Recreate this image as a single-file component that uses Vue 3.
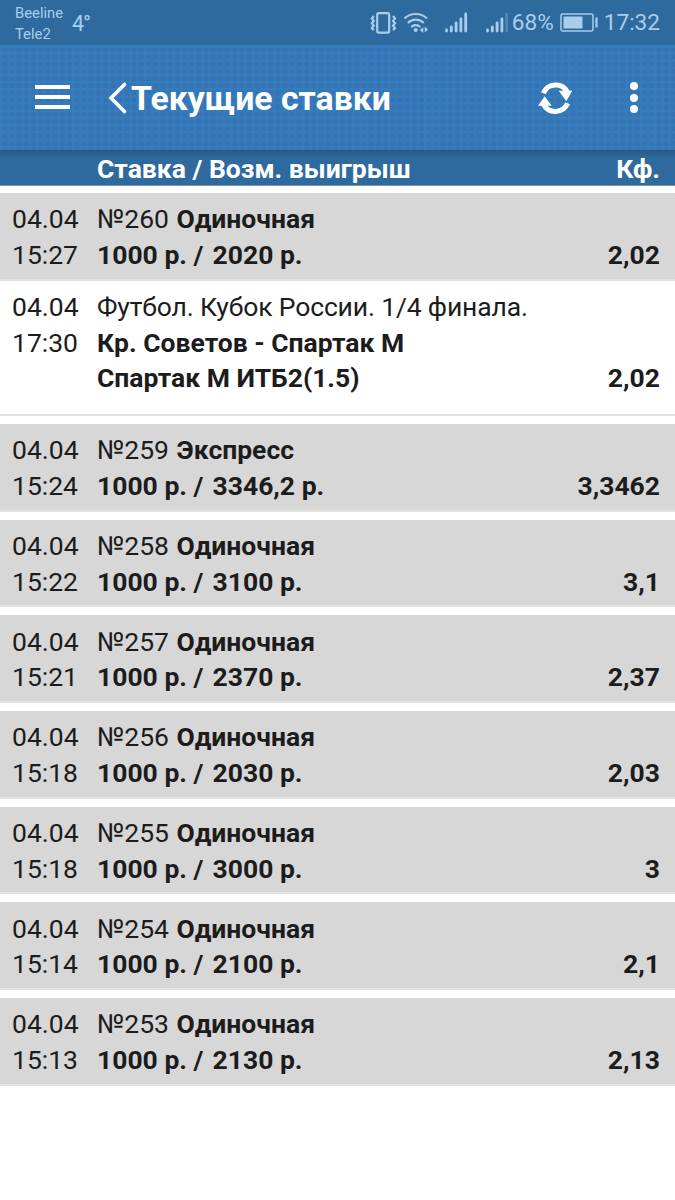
<template>
    <div class="screen">
        <div class="status-bar">
            <div class="carriers">
                <div>Beeline</div>
                <div>Tele2</div>
            </div>
            <div class="temp">4<span class="degree">°</span></div>
            <div class="indicators">
                <svg class="vibro" width="27" height="22" viewBox="0 0 27 22">
                    <rect x="7.2" y="1.2" width="12" height="19.4" rx="1.5" />
                    <path d="M3.8 4l-2 2.5 2 2.4-2 2.4 2 2.4-2 2.4 2 2M23 4l2 2.5-2 2.4 2 2.4-2 2.4 2 2.4-2 2" />
                </svg>
                <svg class="wifi" width="26" height="21" viewBox="0 0 26 21">
                    <path d="M1.500 6.500c6-6 16.500-6 22.500 0M4.800 11c4.500-4.500 11.500-4.500 16 0M8.200 15c2.500-2.600 6.500-2.600 9 0" />
                    <circle cx="12.700" cy="18" r="2" />
                    <path class="fill" d="M20.300 15v6l-3.500-3zM21.700 14.500v6l3.500-3z" />
                </svg>
                <svg v-for="n in 2" :key="n" :class="'signal signal' + n" width="23" height="21" viewBox="0 0 23 21">
                    <path d="M1.500 18v1M6.300 15v4M11.100 11v8M15.900 7v12" />
                    <path :class="{ faded: n === 2 }" d="M20.700 2v17" />
                </svg>
                <span class="percent">68%</span>
                <svg class="battery" width="39" height="19" viewBox="0 0 39 19">
                    <rect class="case" x="1" y="1" width="32" height="17" rx="2" />
                    <rect class="charge" x="3.500" y="3.500" width="19" height="12" />
                    <path d="M36.500 4.500v10" />
                </svg>
                <span class="clock">17:32</span>
            </div>
        </div>
        <div class="toolbar">
            <button class="menu">
                <span></span>
                <span></span>
                <span></span>
            </button>
            <button class="back">
                <svg width="20" height="34" viewBox="0 0 20 34">
                    <path d="M16.500 3.500L3 17l13.500 13.500" />
                </svg>
            </button>
            <h1>Текущие ставки</h1>
            <button class="refresh">
                <svg width="36" height="34" viewBox="0 0 36 34">
                    <path class="arc" d="M5.300 12.300a13.500 13.500 0 0 1 24.200-1.300M29.700 22.300a13.500 13.500 0 0 1-24.200 1.200" />
                    <path d="M20.700 9.700h13.600l-6 10.500zM0 24.800h13.700l-7-9.500z" />
                </svg>
            </button>
            <button class="more">
                <i></i>
                <i></i>
                <i></i>
            </button>
        </div>
        <div class="columns">
            <span>Ставка / Возм. выигрыш</span>
            <span>Кф.</span>
        </div>
        <div class="bets">
            <div v-for="bet in bets" :key="bet.id" class="bet">
                <div class="row">
                    <div class="date">04.04<br>{{bet.time}}</div>
                    <div class="info">
                        <div>№{{bet.id}} <b class="type">{{bet.type}}</b></div>
                        <div><b>1000 р. / <span class="win">{{bet.win}} р.</span></b></div>
                    </div>
                    <div class="coef">{{bet.coef}}</div>
                </div>
                <div v-for="event in bet.events" :key="event.teams" class="row event">
                    <div class="date">04.04<br>{{event.time}}</div>
                    <div class="info">
                        <div class="league">{{event.league}}</div>
                        <div><b>{{event.teams}}</b></div>
                        <div><b>{{event.pick}}</b></div>
                    </div>
                    <div class="coef">{{event.coef}}</div>
                </div>
            </div>
        </div>
    </div>
</template>

<script setup>
    import {ref} from "vue";

    const single = 'Одиночная';

    const bets = ref([
        {
            id: 260, time: '15:27', type: single, win: '2020', coef: '2,02',
            events: [{
                time: '17:30',
                league: 'Футбол. Кубок России. 1/4 финала.',
                teams: 'Кр. Советов - Спартак М',
                pick: 'Спартак М ИТБ2(1.5)',
                coef: '2,02'
            }]
        },
        {id: 259, time: '15:24', type: 'Экспресс', win: '3346,2', coef: '3,3462'},
        {id: 258, time: '15:22', type: single, win: '3100', coef: '3,1'},
        {id: 257, time: '15:21', type: single, win: '2370', coef: '2,37'},
        {id: 256, time: '15:18', type: single, win: '2030', coef: '2,03'},
        {id: 255, time: '15:18', type: single, win: '3000', coef: '3'},
        {id: 254, time: '15:14', type: single, win: '2100', coef: '2,1'},
        {id: 253, time: '15:13', type: single, win: '2130', coef: '2,13'},
    ]);
</script>

<style>
    body {
        margin: 0;
        background-color: #fff;
    }
</style>

<style scoped>
    * {
        box-sizing: border-box;
    }

    .screen {
        width: 675px;
        height: 1200px;
        overflow: hidden;
        font-family: Roboto, 'Liberation Sans', sans-serif;
        color: #1c1c1c;
        background-color: #fff;
    }

    .status-bar {
        display: flex;
        height: 45px;
        padding-left: 15px;
        color: #a9cdec;
        background-color: #2e6a9e;
    }

    .carriers {
        width: 57px;
        padding-top: 3px;
        font-size: 14.8px;
        line-height: 20.5px;
    }

    .temp {
        font-size: 21.5px;
        line-height: 47px;
    }

    .degree {
        margin-left: -1px;
    }

    .indicators {
        display: flex;
        align-items: center;
        margin-left: auto;
        padding-right: 15px;
        font-size: 22.6px;
    }

    .indicators svg {
        fill: none;
        stroke: #a9cdec;
        stroke-width: 2.2;
    }

    .wifi {
        margin-left: 6px;
    }

    .indicators .wifi circle,
    .indicators .fill,
    .indicators .charge {
        fill: #a9cdec;
        stroke: none;
    }

    .indicators .signal {
        stroke-width: 2.8;
        stroke-linecap: round;
    }

    .signal1 {
        margin-left: 16px;
    }

    .signal2 {
        margin-left: 18px;
    }

    .faded {
        opacity: 0.3;
    }

    .percent {
        margin-left: 3px;
    }

    .battery {
        margin: 0 5px 0 6px;
    }

    .indicators .case {
        stroke-width: 1.5;
    }

    .toolbar {
        display: flex;
        align-items: center;
        height: 105px;
        padding: 0 37px 0 35px;
        background-color: #3872b4;
        background-image:
            linear-gradient(90deg, #327dbc 2px, transparent 2.6px),
            linear-gradient(#327dbc 2px, transparent 2.6px);
        background-size: 7.2px 7.2px;
    }

    button {
        padding: 0;
        border: none;
        background: none;
    }

    button svg {
        display: block;
    }

    .menu span {
        display: block;
        width: 35px;
        height: 4px;
        margin: 6px 0;
        background-color: #fff;
    }

    .menu {
        margin-top: -1px;
    }

    .back {
        margin-left: 38px;
    }

    .back path {
        fill: none;
        stroke: #fff;
        stroke-width: 3.6;
        stroke-linecap: round;
    }

    h1 {
        margin: 2px 0 0 3px;
        font-size: 33.8px;
        font-weight: bold;
        color: #fff;
    }

    .refresh {
        margin-left: auto;
    }

    .refresh path {
        fill: #fff;
    }

    .refresh .arc {
        fill: none;
        stroke: #fff;
        stroke-width: 5;
    }

    .more {
        margin-left: 56px;
    }

    .more i {
        display: block;
        width: 8px;
        height: 8px;
        margin: 3.4px 0;
        border-radius: 50%;
        background-color: #fff;
    }

    .columns {
        display: flex;
        justify-content: space-between;
        height: 36px;
        padding: 0 15px 0 97px;
        font-size: 26.5px;
        font-weight: bold;
        line-height: 38px;
        color: #fff;
        border-bottom: 1px solid #7594b3;
        background: linear-gradient(#285a87, #2e6a9e 9px);
    }

    .bets {
        padding-top: 7px;
    }

    .bet {
        margin-bottom: 8px;
    }

    .row {
        display: flex;
        height: 87.65px;
        padding: 8.2px 15px 0 12px;
        font-size: 26.5px;
        line-height: 35.7px;
        border-bottom: 2px solid #e2e2e2;
        background-color: #d7d7d7;
    }

    .event {
        height: 135.5px;
        background-color: #fff;
    }

    .date {
        width: 85px;
    }

    .type {
        margin-left: 1px;
    }

    .win {
        margin-left: 2.5px;
    }

    .league {
        letter-spacing: -0.15px;
    }

    .coef {
        align-self: flex-start;
        margin: 35.7px 0 0 auto;
        font-weight: bold;
    }

    .event .coef {
        margin-top: 71.4px;
    }
</style>
